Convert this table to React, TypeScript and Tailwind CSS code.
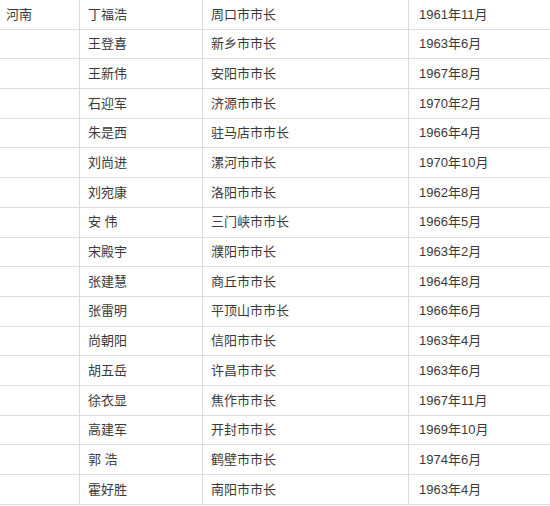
import React from "react";

const rows: [string, string, string, string][] = [
  ["河南", "丁福浩", "周口市市长", "1961年11月"],
  ["", "王登喜", "新乡市市长", "1963年6月"],
  ["", "王新伟", "安阳市市长", "1967年8月"],
  ["", "石迎军", "济源市市长", "1970年2月"],
  ["", "朱是西", "驻马店市市长", "1966年4月"],
  ["", "刘尚进", "漯河市市长", "1970年10月"],
  ["", "刘宛康", "洛阳市市长", "1962年8月"],
  ["", "安 伟", "三门峡市市长", "1966年5月"],
  ["", "宋殿宇", "濮阳市市长", "1963年2月"],
  ["", "张建慧", "商丘市市长", "1964年8月"],
  ["", "张雷明", "平顶山市市长", "1966年6月"],
  ["", "尚朝阳", "信阳市市长", "1963年4月"],
  ["", "胡五岳", "许昌市市长", "1963年6月"],
  ["", "徐衣显", "焦作市市长", "1967年11月"],
  ["", "高建军", "开封市市长", "1969年10月"],
  ["", "郭 浩", "鹤壁市市长", "1974年6月"],
  ["", "霍好胜", "南阳市市长", "1963年4月"],
];

export default function App() {
  return (
    <div
      className="w-[550px] h-[506px] overflow-hidden bg-white text-[13px] text-[#3a3a3a]"
      style={{ fontFamily: '"Liberation Sans", "Noto Sans CJK SC", sans-serif' }}
    >
      {rows.map((r, i) => (
        <div
          key={i}
          className="grid grid-cols-[79px_123px_206px_1fr] h-[29.69px] border-b border-[#dcdcdc]"
        >
          <div className="pl-[6px] flex items-center whitespace-pre">{r[0]}</div>
          <div className="pl-[8px] flex items-center border-l border-[#dcdcdc] whitespace-pre">{r[1]}</div>
          <div className="pl-[8px] flex items-center border-l border-[#dcdcdc] whitespace-pre">{r[2]}</div>
          <div className="pl-[10px] flex items-center border-l border-[#dcdcdc] whitespace-pre">{r[3]}</div>
        </div>
      ))}
    </div>
  );
}
